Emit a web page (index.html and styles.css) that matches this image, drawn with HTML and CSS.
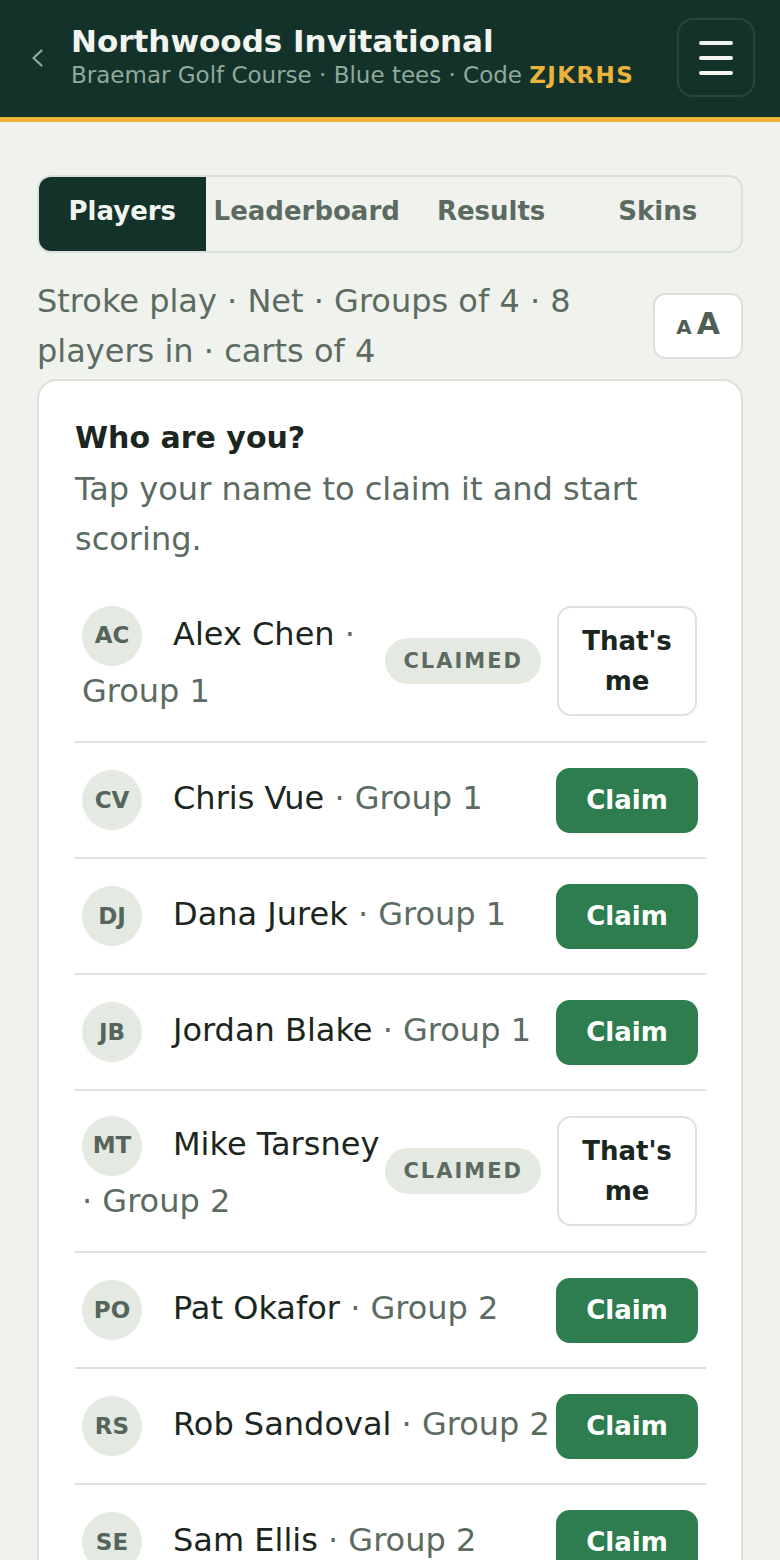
FILE: index.html
```html
<!DOCTYPE html>
<html lang="en">
<head>
<meta charset="utf-8">
<meta name="viewport" content="width=device-width, initial-scale=1">
<title>Northwoods Invitational</title>
<link rel="stylesheet" href="styles.css">
</head>
<body>
<header class="topbar">
  <button class="back" aria-label="Back">
    <svg width="12" height="18" viewBox="0 0 12 18" aria-hidden="true"><polyline points="10.5,1.5 2.5,9 10.5,16.5" fill="none" stroke="#8fae9f" stroke-width="2.2" stroke-linecap="round" stroke-linejoin="round"/></svg>
  </button>
  <div class="titles">
    <h1 class="title">Northwoods Invitational</h1>
    <p class="subtitle">Braemar Golf Course · Blue tees · Code <b class="code">ZJKRHS</b></p>
  </div>
  <button class="menu" aria-label="Menu"><span class="bar"></span><span class="bar"></span><span class="bar"></span></button>
</header>
<main class="page">
  <nav class="tabs">
    <a class="tab active">Players</a>
    <a class="tab">Leaderboard</a>
    <a class="tab">Results</a>
    <a class="tab">Skins</a>
  </nav>
  <div class="meta-row">
    <p class="meta">Stroke play · Net · Groups of 4 · 8 players in · carts of 4</p>
    <button class="textsize" aria-label="Text size"><span class="aa"><span class="a-sm">A</span><span class="a-lg">A</span></span></button>
  </div>
  <section class="card">
    <h2 class="card-title">Who are you?</h2>
    <p class="lead">Tap your name to claim it and start scoring.</p>
    <ul class="players">
      <li class="player"><div class="who"><span class="avatar">AC</span>Alex Chen<span class="grp"> · Group 1</span></div><span class="badge">CLAIMED</span><button class="btn btn-secondary">That's me</button></li>
      <li class="player"><div class="who"><span class="avatar">CV</span>Chris Vue<span class="grp"> · Group 1</span></div><button class="btn btn-primary">Claim</button></li>
      <li class="player"><div class="who"><span class="avatar">DJ</span>Dana Jurek<span class="grp"> · Group 1</span></div><button class="btn btn-primary">Claim</button></li>
      <li class="player"><div class="who"><span class="avatar">JB</span>Jordan Blake<span class="grp"> · Group 1</span></div><button class="btn btn-primary">Claim</button></li>
      <li class="player"><div class="who"><span class="avatar">MT</span>Mike Tarsney<span class="grp"> · Group 2</span></div><span class="badge">CLAIMED</span><button class="btn btn-secondary">That's me</button></li>
      <li class="player"><div class="who"><span class="avatar">PO</span>Pat Okafor<span class="grp"> · Group 2</span></div><button class="btn btn-primary">Claim</button></li>
      <li class="player"><div class="who"><span class="avatar">RS</span>Rob Sandoval<span class="grp"> · Group 2</span></div><button class="btn btn-primary">Claim</button></li>
      <li class="player"><div class="who"><span class="avatar">SE</span>Sam Ellis<span class="grp"> · Group 2</span></div><button class="btn btn-primary">Claim</button></li>
    </ul>
  </section>
</main>
</body>
</html>
```
FILE: styles.css
```css
* { box-sizing: border-box; }
html, body { margin: 0; padding: 0; }
body {
  background: #f0f2ee;
  font-family: "DejaVu Sans", Verdana, sans-serif;
  color: #1b2620;
}
button { font-family: inherit; cursor: pointer; }

.topbar {
  display: flex;
  align-items: center;
  height: 122px;
  padding: 0 25px 2px 31px;
  background: #13322a;
  border-bottom: 5px solid #e9b33c;
}
.back {
  display: flex;
  align-items: center;
  justify-content: center;
  width: 12px;
  height: 18px;
  padding: 0;
  border: 0;
  background: none;
}
.back svg { display: block; }
.titles { flex: 1; min-width: 0; margin-left: 28px; padding-bottom: 2px; }
.title {
  margin: 0;
  font-size: 31px;
  line-height: 36px;
  font-weight: 700;
  color: #f2f4ef;
  white-space: nowrap;
}
.subtitle {
  margin: 0;
  font-size: 23px;
  line-height: 32px;
  color: #8fa99c;
  white-space: nowrap;
}
.code { color: #e9b33c; font-weight: 700; letter-spacing: 0.06em; }
.menu {
  display: flex;
  flex-direction: column;
  align-items: center;
  justify-content: center;
  gap: 11px;
  width: 78px;
  height: 79px;
  padding: 0;
  background: #13322a;
  border: 2px solid #28463d;
  border-radius: 16px;
}
.bar { display: block; width: 34px; height: 4px; border-radius: 2px; background: #f2f4ef; }

.page { padding: 53px 37px 40px; }

.tabs {
  display: flex;
  height: 78px;
  border: 2px solid #dbe0da;
  border-radius: 14px;
  overflow: hidden;
}
.tab {
  flex: 1 1 0;
  padding: 0 8px 5px;
  font-size: 26px;
  font-weight: 700;
  line-height: 69px;
  text-align: center;
  white-space: nowrap;
  color: #5c6b62;
}
.tab.active { background: #13322a; color: #f2f4ef; }

.meta-row {
  display: flex;
  align-items: center;
  justify-content: space-between;
  gap: 20px;
  margin-top: 23px;
}
.meta {
  margin: 0;
  font-size: 32px;
  line-height: 50px;
  color: #5c6b62;
}
.textsize {
  flex: none;
  display: flex;
  align-items: center;
  justify-content: center;
  width: 90px;
  height: 66px;
  padding: 0;
  background: #ffffff;
  border: 2px solid #dbe0da;
  border-radius: 12px;
  color: #4f5e55;
  font-weight: 700;
}
.aa { display: block; line-height: 30px; padding-top: 2px; }
.a-sm { font-size: 20px; margin-right: 5px; }
.a-lg { font-size: 30px; }

.card {
  margin-top: 3px;
  background: #ffffff;
  border: 2px solid #dbe0da;
  border-radius: 20px;
  padding: 36px 35px 0 36px;
}
.card-title {
  margin: 0 0 5px;
  font-size: 30px;
  line-height: 42px;
  font-weight: 700;
  color: #1b2620;
}
.lead {
  margin: 0;
  font-size: 32px;
  line-height: 50px;
  color: #5c6b62;
}
.players { list-style: none; margin: 17px 0 0; padding: 0; }
.player {
  display: flex;
  align-items: center;
  padding: 24.5px 8px 24.5px 7px;
  border-bottom: 2px solid #dde2dc;
}
.who {
  flex: 1;
  min-width: 0;
  font-size: 32px;
  line-height: 1.6;
  color: #1b2620;
}
.grp { color: #5c6b62; }
.avatar {
  display: inline-flex;
  align-items: center;
  justify-content: center;
  width: 60px;
  height: 60px;
  margin-right: 31px;
  border-radius: 50%;
  background: #e4e9e2;
  color: #56655c;
  font-size: 23px;
  font-weight: 700;
  line-height: 1;
  vertical-align: middle;
}
.badge {
  flex: none;
  margin-right: 16px;
  padding: 0 18px;
  height: 46px;
  line-height: 46px;
  border-radius: 23px;
  background: #e4e9e2;
  color: #5c6b62;
  font-size: 21px;
  font-weight: 700;
  letter-spacing: 2px;
}
.btn {
  flex: none;
  font-size: 26px;
  font-weight: 700;
  line-height: 40px;
  border-radius: 14px;
  text-align: center;
}
.btn-primary {
  width: 142px;
  padding: 10.5px 0;
  background: #2e7d4f;
  border: 2px solid #2e7d4f;
  color: #ffffff;
}
.btn-secondary {
  width: 140px;
  margin-right: 1px;
  padding: 13px 10px;
  background: #ffffff;
  border: 2px solid #dde2dc;
  color: #1b2620;
}
```
